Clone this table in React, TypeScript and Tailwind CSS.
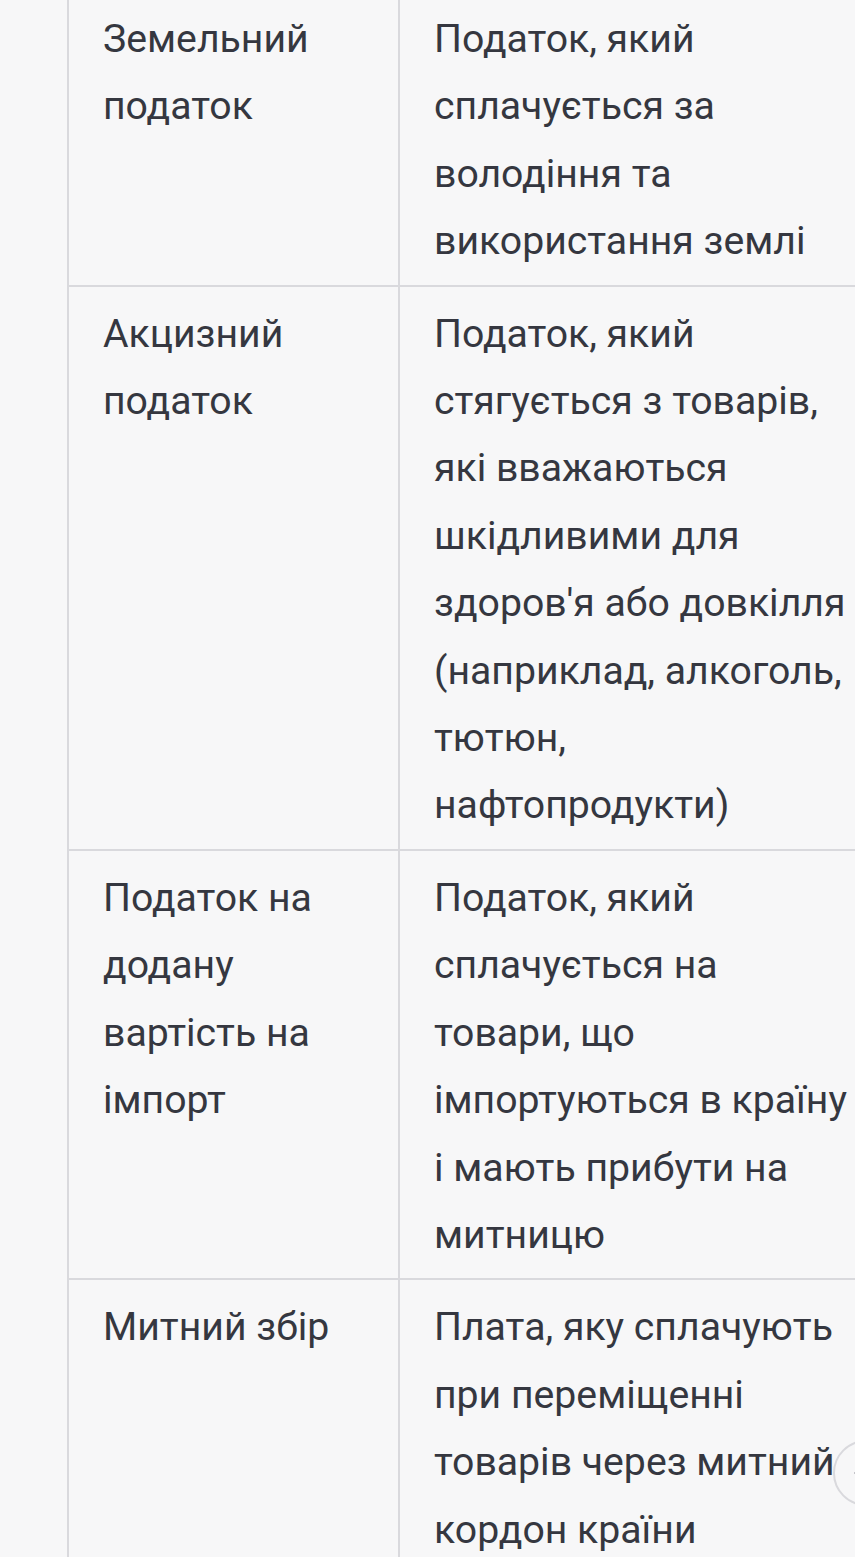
import React from "react";
import { ArrowDown } from "lucide-react";

const rows: { a: string[]; b: string[] }[] = [
  {
    a: ["Земельний", "податок"],
    b: ["Податок, який", "сплачується за", "володіння та", "використання землі"],
  },
  {
    a: ["Акцизний", "податок"],
    b: [
      "Податок, який",
      "стягується з товарів,",
      "які вважаються",
      "шкідливими для",
      "здоров'я або довкілля",
      "(наприклад, алкоголь,",
      "тютюн,",
      "нафтопродукти)",
    ],
  },
  {
    a: ["Податок на", "додану", "вартість на", "імпорт"],
    b: [
      "Податок, який",
      "сплачується на",
      "товари, що",
      "імпортуються в країну",
      "і мають прибути на",
      "митницю",
    ],
  },
  {
    a: ["Митний збір"],
    b: [
      "Плата, яку сплачують",
      "при переміщенні",
      "товарів через митний",
      "кордон країни",
    ],
  },
];

function Lines({ lines }: { lines: string[] }) {
  return (
    <>
      {lines.map((l, i) => (
        <div key={i} className="whitespace-nowrap">
          {l}
        </div>
      ))}
    </>
  );
}

export default function App() {
  return (
    <div
      className="relative w-[855px] h-[1557px] overflow-hidden bg-[#f7f7f8] text-[#353740] text-[39.2px] leading-[67.4px]"
      style={{ fontFamily: "Roboto, 'Noto Sans', sans-serif" }}
    >
      <div className="ml-[67px] -mt-[8px] w-[900px] border-l-2 border-[#d9d9dd]">
        {rows.map((r, i) => (
          <div key={i} className="flex border-b-2 border-[#d9d9dd]">
            <div className="w-[331px] shrink-0 border-r-2 border-[#d9d9dd] pl-[34px] pr-4 pt-[14px] pb-[9px]">
              <Lines lines={r.a} />
            </div>
            <div className="flex-1 pl-[34px] pr-4 pt-[14px] pb-[9px]">
              <Lines lines={r.b} />
            </div>
          </div>
        ))}
      </div>
      <div className="absolute left-[833px] top-[1440px] w-[66px] h-[66px] rounded-full border-2 border-[#d9d9dd] bg-[#f7f7f8] flex items-center justify-center">
        <ArrowDown size={34} strokeWidth={2} className="text-[#40414f]" />
      </div>
    </div>
  );
}
